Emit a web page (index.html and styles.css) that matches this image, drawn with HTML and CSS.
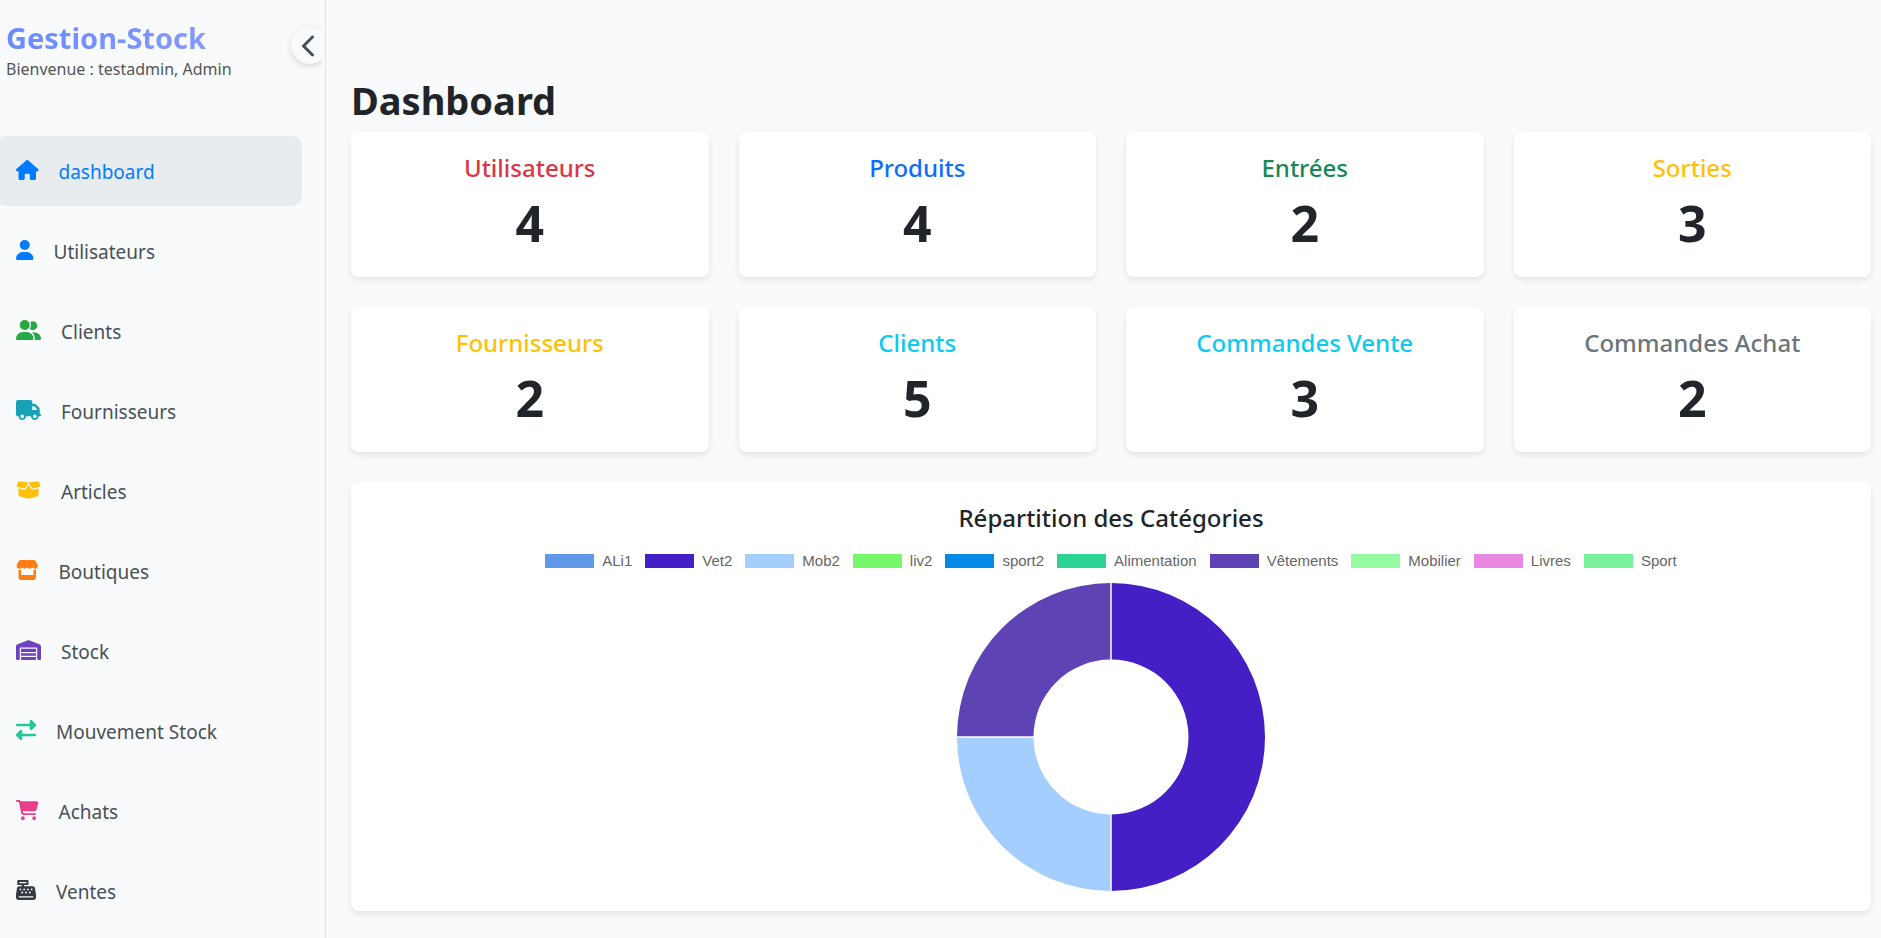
FILE: index.html
```html
<!DOCTYPE html>
<html lang="fr">
<head>
<meta charset="utf-8">
<title>Gestion-Stock</title>
<link rel="stylesheet" href="styles.css">
</head>
<body>
<div class="layout">
  <aside class="sidebar">
    <div class="sidebar-inner">
      <header class="sidebar-header">
        <div>
          <div class="brand">Gestion-Stock</div>
          <div class="welcome">Bienvenue : testadmin, Admin</div>
        </div>
        <button class="toggle" type="button" aria-label="Réduire le menu">
          <svg viewBox="0 0 320 512"><path d="M9.4 233.4c-12.500 12.500-12.500 32.800 0 45.300l192 192c12.500 12.500 32.800 12.500 45.300 0s12.500-32.800 0-45.300L77.300 256 246.600 86.600c12.500-12.500 12.500-32.800 0-45.300s-32.800-12.500-45.300 0l-192 192z"/></svg>
        </button>
      </header>
      <nav class="nav">
        <a class="nav-link active" href="#"><svg class="icon" viewBox="0 0 576 512"><path d="M575.8 255.5c0 18-15 32.1-32 32.1h-32l.7 160.2c0 2.700-.2 5.400-.5 8.100V472c0 22.100-17.900 40-40 40H456c-1.100 0-2.200 0-3.300-.1c-1.400 .1-2.800 .1-4.200 .1H416 392c-22.100 0-40-17.900-40-40V448 384c0-17.700-14.300-32-32-32H256c-17.700 0-32 14.300-32 32v64 24c0 22.100-17.900 40-40 40H160 128.100c-1.500 0-3-.1-4.500-.2c-1.200 .1-2.400 .2-3.600 .2H104c-22.100 0-40-17.900-40-40V360c0-.9 0-1.900 .1-2.800V287.600H32c-18 0-32-14-32-32.100c0-9 3-17 10-24L266.400 8c7-7 15-8 22-8s15 2 21 7L564.800 231.500c8 7 12 15 11 24z"/></svg><span class="label">dashboard</span></a>
        <a class="nav-link" href="#"><svg class="icon blue" viewBox="0 0 448 512"><path d="M224 256A128 128 0 1 0 224 0a128 128 0 1 0 0 256zm-45.7 48C79.8 304 0 383.8 0 482.3C0 498.7 13.3 512 29.7 512H418.3c16.4 0 29.7-13.3 29.7-29.7C448 383.8 368.2 304 269.7 304H178.3z"/></svg><span class="label">Utilisateurs</span></a>
        <a class="nav-link" href="#"><svg class="icon green" viewBox="0 0 640 512"><path d="M96 128a128 128 0 1 1 256 0A128 128 0 1 1 96 128zM0 482.3C0 383.8 79.8 304 178.3 304h91.4C368.2 304 448 383.8 448 482.3c0 16.4-13.3 29.7-29.7 29.7H29.7C13.3 512 0 498.7 0 482.3zM609.3 512H471.4c5.4-9.4 8.6-20.3 8.6-32v-8c0-60.7-27.1-115.2-69.8-151.8c2.4-.1 4.7-.2 7.1-.2h61.4C567.8 320 640 392.2 640 481.3c0 17-13.8 30.7-30.7 30.7zM432 256c-31 0-59-12.6-79.3-32.9C372.4 196.5 384 163.6 384 128c0-26.8-6.6-52.1-18.3-74.3C384.3 40.1 407.2 32 432 32c61.9 0 112 50.1 112 112s-50.1 112-112 112z"/></svg><span class="label">Clients</span></a>
        <a class="nav-link" href="#"><svg class="icon teal" viewBox="0 0 640 512"><path d="M48 0C21.5 0 0 21.5 0 48V368c0 26.5 21.5 48 48 48H64c0 53 43 96 96 96s96-43 96-96H384c0 53 43 96 96 96s96-43 96-96h32c17.7 0 32-14.3 32-32s-14.3-32-32-32V288 256 237.3c0-17-6.7-33.3-18.7-45.3L512 114.7c-12-12-28.3-18.7-45.3-18.7H416V48c0-26.5-21.5-48-48-48H48zM416 160h50.7L544 237.3V256H416V160zM112 416a48 48 0 1 1 96 0 48 48 0 1 1 -96 0zm368-48a48 48 0 1 1 0 96 48 48 0 1 1 0-96z"/></svg><span class="label">Fournisseurs</span></a>
        <a class="nav-link" href="#"><svg class="icon yellow" viewBox="0 0 640 512"><path d="M58.9 42.1c3-6.1 9.6-9.6 16.3-8.7L320 64 564.8 33.4c6.7-.8 13.3 2.7 16.3 8.7l41.7 83.4c9 17.9-.6 39.6-19.8 45.1L439.6 217.3c-13.9 4-28.8-1.9-36.2-14.3L320 64 236.6 203c-7.4 12.4-22.3 18.3-36.2 14.3L37.1 170.6c-19.3-5.5-28.8-27.2-19.8-45.1L58.9 42.1zM321.1 128l54.9 91.4c14.9 24.8 44.6 36.6 72.5 28.6L576 211.6v167c0 22-15 41.2-36.4 46.6l-204.1 51c-10.2 2.6-20.9 2.6-31 0l-204.1-51C79 419.7 64 400.5 64 378.5v-167L191.6 248c27.8 8 57.6-3.8 72.5-28.6L318.9 128h2.2z"/></svg><span class="label">Articles</span></a>
        <a class="nav-link" href="#"><svg class="icon orange" viewBox="0 0 576 512"><path d="M547.6 103.8L490.3 13.1C485.2 5 476.1 0 466.4 0H109.6C99.9 0 90.8 5 85.7 13.1L28.3 103.8c-29.6 46.8-3.4 111.9 51.9 119.4c4 .5 8.1 .8 12.1 .8c26.1 0 49.3-11.4 65.2-29c15.9 17.6 39.1 29 65.2 29c26.1 0 49.3-11.4 65.2-29c15.9 17.6 39.1 29 65.2 29c26.2 0 49.3-11.4 65.2-29c16 17.6 39.1 29 65.2 29c4.1 0 8.1-.3 12.1-.8c55.500-7.400 81.800-72.500 52.100-119.400zM499.700 254.900l-.1 0c-5.300 .7-10.700 1.100-16.200 1.100c-12.400 0-24.300-1.900-35.400-5.300V384H128V250.600c-11.200 3.500-23.200 5.400-35.600 5.400c-5.500 0-11-.4-16.300-1.100l-.1 0c-4.100-.6-8.100-1.300-12-2.300V384v64c0 35.300 28.700 64 64 64H448c35.300 0 64-28.700 64-64V384 252.600c-4 1-8 1.800-12.300 2.300z"/></svg><span class="label">Boutiques</span></a>
        <a class="nav-link" href="#"><svg class="icon purple" viewBox="0 0 640 512"><path d="M0 488V171.3c0-26.2 15.9-49.7 40.2-59.4L308.1 4.8c7.6-3.1 16.1-3.1 23.8 0L599.8 111.9c24.3 9.7 40.2 33.3 40.2 59.4V488c0 13.3-10.7 24-24 24H568c-13.3 0-24-10.7-24-24V224c0-17.7-14.3-32-32-32H128c-17.700 0-32 14.300-32 32V488c0 13.300-10.700 24-24 24H24c-13.300 0-24-10.700-24-24zm488 24l-336 0c-13.300 0-24-10.700-24-24V432H512l0 56c0 13.300-10.700 24-24 24zM128 400V336H512v64H128zm0-96V224H512l0 80H128z"/></svg><span class="label">Stock</span></a>
        <a class="nav-link" href="#"><svg class="icon mint" viewBox="0 0 512 512"><path d="M32 96l320 0V32c0-12.9 7.8-24.6 19.8-29.6s25.7-2.2 34.9 6.9l96 96c6 6 9.4 14.1 9.4 22.6s-3.400 16.600-9.400 22.600l-96 96c-9.200 9.200-22.900 11.900-34.900 6.900s-19.800-16.600-19.800-29.600V160L32 160c-17.700 0-32-14.300-32-32s14.300-32 32-32zM480 352c17.700 0 32 14.300 32 32s-14.300 32-32 32H160v64c0 12.900-7.800 24.600-19.800 29.600s-25.700 2.200-34.900-6.900l-96-96c-6-6-9.400-14.100-9.400-22.600s3.400-16.600 9.400-22.600l96-96c9.200-9.200 22.900-11.900 34.900-6.900s19.800 16.600 19.800 29.600l0 64H480z"/></svg><span class="label">Mouvement Stock</span></a>
        <a class="nav-link" href="#"><svg class="icon pink" viewBox="0 0 576 512"><path d="M0 24C0 10.7 10.7 0 24 0H69.5c22 0 41.5 12.8 50.6 32h411c26.3 0 45.5 25 38.6 50.4l-41 152.3c-8.5 31.4-37 53.3-69.5 53.3H170.7l5.4 28.5c2.2 11.3 12.1 19.5 23.6 19.5H488c13.3 0 24 10.7 24 24s-10.7 24-24 24H199.7c-34.6 0-64.3-24.6-70.7-58.5L77.4 54.5c-.7-3.8-4-6.5-7.9-6.5H24C10.7 48 0 37.3 0 24zM128 464a48 48 0 1 1 96 0 48 48 0 1 1 -96 0zm336-48a48 48 0 1 1 0 96 48 48 0 1 1 0-96z"/></svg><span class="label">Achats</span></a>
        <a class="nav-link" href="#"><svg class="icon dark" viewBox="0 0 512 512"><path d="M64 0C46.3 0 32 14.3 32 32V96c0 17.7 14.3 32 32 32h80v32H87c-31.6 0-58.5 23.1-63.3 54.4L1.1 364.1C.4 368.8 0 373.6 0 378.4V448c0 35.3 28.7 64 64 64H448c35.3 0 64-28.7 64-64V378.400c0-4.800-.4-9.600-1.100-14.400L488.200 214.400C483.500 183.100 456.600 160 425 160H208V128h80c17.700 0 32-14.300 32-32V32c0-17.700-14.300-32-32-32H64zM96 48H256c8.800 0 16 7.200 16 16s-7.200 16-16 16H96c-8.800 0-16-7.200-16-16s7.200-16 16-16zM64 432c0-8.800 7.200-16 16-16H432c8.800 0 16 7.200 16 16s-7.200 16-16 16H80c-8.800 0-16-7.200-16-16zm48-168a24 24 0 1 1 0-48 24 24 0 1 1 0 48zm120-24a24 24 0 1 1 -48 0 24 24 0 1 1 48 0zM160 344a24 24 0 1 1 0-48 24 24 0 1 1 0 48zM328 240a24 24 0 1 1 -48 0 24 24 0 1 1 48 0zM256 344a24 24 0 1 1 0-48 24 24 0 1 1 0 48zM424 240a24 24 0 1 1 -48 0 24 24 0 1 1 48 0zM352 344a24 24 0 1 1 0-48 24 24 0 1 1 0 48z"/></svg><span class="label">Ventes</span></a>
      </nav>
    </div>
  </aside>

  <main class="main">
    <h1 class="page-title">Dashboard</h1>
    <section class="stats">
      <article class="card"><h2 class="card-title text-danger">Utilisateurs</h2><p class="card-value">4</p></article>
      <article class="card"><h2 class="card-title text-primary">Produits</h2><p class="card-value">4</p></article>
      <article class="card"><h2 class="card-title text-success">Entrées</h2><p class="card-value">2</p></article>
      <article class="card"><h2 class="card-title text-warning">Sorties</h2><p class="card-value">3</p></article>
      <article class="card"><h2 class="card-title text-warning">Fournisseurs</h2><p class="card-value">2</p></article>
      <article class="card"><h2 class="card-title text-info">Clients</h2><p class="card-value">5</p></article>
      <article class="card"><h2 class="card-title text-info">Commandes Vente</h2><p class="card-value">3</p></article>
      <article class="card"><h2 class="card-title text-secondary">Commandes Achat</h2><p class="card-value">2</p></article>
    </section>
    <section class="card chart-card">
      <h2 class="card-title">Répartition des Catégories</h2>
      <ul class="legend">
        <li><span class="swatch c-ali1"></span>ALi1</li>
        <li><span class="swatch c-vet2"></span>Vet2</li>
        <li><span class="swatch c-mob2"></span>Mob2</li>
        <li><span class="swatch c-liv2"></span>liv2</li>
        <li><span class="swatch c-sport2"></span>sport2</li>
        <li><span class="swatch c-alimentation"></span>Alimentation</li>
        <li><span class="swatch c-vetements"></span>Vêtements</li>
        <li><span class="swatch c-mobilier"></span>Mobilier</li>
        <li><span class="swatch c-livres"></span>Livres</li>
        <li><span class="swatch c-sport"></span>Sport</li>
      </ul>
      <svg class="donut" viewBox="-154 -154 308 308" role="img" aria-label="Répartition des Catégories">
        <path fill="#441fc5" d="M0-154A154 154 0 0 1 0 154V77.500A77.500 77.500 0 0 0 0-77.500Z"/>
        <path fill="#a4cefd" d="M0 154A154 154 0 0 1-154 0H-77.500A77.500 77.500 0 0 0 0 77.500Z"/>
        <path fill="#5e43b4" d="M-154 0A154 154 0 0 1 0-154V-77.500A77.500 77.500 0 0 0-77.500 0Z"/>
        <path stroke="#fff" stroke-width="1.500" fill="none" d="M0-154V-77M0 77V154M-154 0H-77"/>
      </svg>
    </section>
  </main>
</div>
</body>
</html>
```
FILE: styles.css
```css
* {
  box-sizing: border-box;
}

body {
  margin: 0;
  background: #f8fafc;
  color: #212529;
  font-family: "Noto Sans", "Open Sans", sans-serif;
}

h1, h2, p, ul {
  margin: 0;
  padding: 0;
}

.layout {
  display: flex;
  height: 100vh;
  overflow: hidden;
}

.sidebar {
  flex: 0 0 326px;
  padding-right: 3px;
  border-right: 1px solid #dee2e6;
}

.sidebar-inner {
  height: 100%;
  overflow: hidden;
}

.sidebar-header {
  display: flex;
  justify-content: space-between;
  height: 136px;
  padding: 20px 0 0 6px;
}

.brand {
  width: max-content;
  font-size: 29px;
  font-weight: 700;
  line-height: 36px;
  background: linear-gradient(90deg, #6b8cff, #8698ff);
  background-clip: text;
  color: transparent;
}

.welcome {
  color: #555;
  font-size: 16px;
  line-height: 26px;
  white-space: nowrap;
}

.toggle {
  display: flex;
  align-items: center;
  justify-content: center;
  flex: none;
  width: 37px;
  height: 37px;
  margin: 7px -6px 0 0;
  padding: 0;
  border: 0;
  border-radius: 50%;
  background: #f8fafc;
  box-shadow: 0 2px 6px rgba(0, 0, 0, 0.15);
}

.toggle svg {
  height: 24px;
  fill: #495057;
}

.nav {
  display: flex;
  flex-direction: column;
  gap: 10px;
  margin: 0 20px 0 -4px;
}

.nav-link {
  display: flex;
  align-items: center;
  flex: none;
  gap: 20px;
  height: 70px;
  padding: 0 20px;
  border-radius: 10px;
  color: #495057;
  font-size: 19px;
  text-decoration: none;
}

.nav-link.active {
  background: #e9ecef;
  color: #007bff;
}

.label {
  padding-top: 2px;
}

.icon {
  flex: none;
  height: 20px;
  margin-bottom: 2px;
  fill: currentColor;
}

.blue { color: #007bff; }
.green { color: #28a745; }
.teal { color: #17a2b8; }
.yellow { color: #ffc107; }
.orange { color: #fd7e14; }
.purple { color: #6f42c1; }
.mint { color: #20c997; }
.pink { color: #e83e8c; }
.dark { color: #343a40; }

.main {
  flex: 1;
  min-width: 0;
  padding: 76px 10px 26px 25px;
}

.page-title {
  margin-bottom: 8px;
  font-size: 38px;
  font-weight: 700;
  line-height: 48px;
}

.stats {
  display: grid;
  grid-template-columns: repeat(4, 1fr);
  gap: 30px;
  margin-bottom: 30px;
}

.card {
  padding: 20px;
  border-radius: 8px;
  background: #fff;
  box-shadow: 0 3px 6px rgba(0, 0, 0, 0.09);
  text-align: center;
}

.card-title {
  margin-bottom: 8px;
  font-size: 24px;
  font-weight: 500;
  line-height: 32px;
}

.card-value {
  padding-bottom: 2px;
  font-size: 50px;
  font-weight: 700;
  line-height: 63px;
}

.text-danger { color: #dc3545; }
.text-primary { color: #0d6efd; }
.text-success { color: #198754; }
.text-warning { color: #ffc107; }
.text-info { color: #0dcaf0; }
.text-secondary { color: #6c757d; }

.chart-card {
  display: flex;
  flex-direction: column;
  align-items: center;
}

.legend {
  display: flex;
  flex-wrap: wrap;
  justify-content: center;
  gap: 13px;
  margin: 11px 0 14px;
  color: #666;
  font-family: "Liberation Sans", Arial, sans-serif;
  font-size: 15px;
  line-height: 16px;
  list-style: none;
}

.legend li {
  display: flex;
  align-items: center;
  gap: 8px;
}

.swatch {
  width: 49px;
  height: 14px;
}

.c-ali1 { background: #5f98e8; }
.c-vet2 { background: #441fc5; }
.c-mob2 { background: #a4cefd; }
.c-liv2 { background: #75f76a; }
.c-sport2 { background: #058ae8; }
.c-alimentation { background: #2bd394; }
.c-vetements { background: #5e43b4; }
.c-mobilier { background: #95faa0; }
.c-livres { background: #e888e0; }
.c-sport { background: #79f19c; }

.donut {
  width: 308px;
  height: 308px;
}
```
